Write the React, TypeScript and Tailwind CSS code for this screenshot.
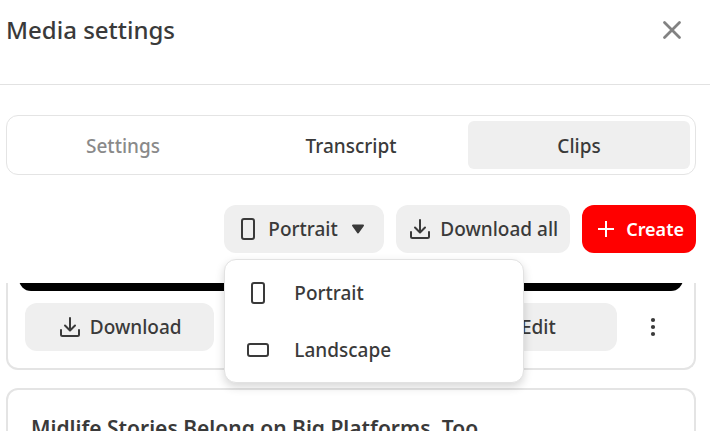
import { useState } from 'react';
import type { ReactNode } from 'react';

const tabs = ['Settings', 'Transcript', 'Clips'];
const formats = ['Portrait', 'Landscape'];

function PortraitIcon() {
  return (
    <svg className="size-6" viewBox="0 0 24 24" fill="none" stroke="currentColor" strokeWidth="2" aria-hidden="true">
      <rect x="6" y="2" width="12" height="20" rx="2" />
    </svg>
  );
}

function LandscapeIcon() {
  return (
    <svg className="size-6" viewBox="0 0 24 24" fill="none" stroke="currentColor" strokeWidth="2" aria-hidden="true">
      <rect x="2" y="6" width="20" height="12" rx="2" />
    </svg>
  );
}

function DownloadIcon() {
  return (
    <svg
      className="size-6"
      viewBox="0 0 24 24"
      fill="none"
      stroke="currentColor"
      strokeWidth="2"
      strokeLinecap="round"
      strokeLinejoin="round"
      aria-hidden="true"
    >
      <path d="M12 3v12M7 10.500l5 5 5-5M3 15v4.500a1.500 1.500 0 0 0 1.500 1.500h15a1.500 1.500 0 0 0 1.500-1.500V15" />
    </svg>
  );
}

function EditIcon() {
  return (
    <svg className="size-6" viewBox="0 0 24 24" fill="none" stroke="currentColor" strokeWidth="2" aria-hidden="true">
      <path d="M4 20h4L19 9l-4-4L4 16z" />
    </svg>
  );
}

function SoftButton({ icon, children, className = '' }: { icon: ReactNode; children: ReactNode; className?: string }) {
  return (
    <button type="button" className={`flex h-12 items-center justify-center gap-2 rounded-xl bg-[#efefef] px-3 ${className}`}>
      {icon}
      {children}
    </button>
  );
}

export default function App() {
  const [tab, setTab] = useState('Clips');
  const [format, setFormat] = useState('Portrait');
  const [open, setOpen] = useState(true);

  return (
    <main className="flex h-screen flex-col overflow-hidden bg-white font-['Noto_Sans',sans-serif] text-[19px] leading-6 font-medium text-[#3a3a3a]">
      <header className="flex items-start justify-between border-b border-[#e2e2e2] pt-3 pr-5 pb-9 pl-1.5">
        <h1 className="text-2xl leading-9 font-medium">Media settings</h1>
        <button type="button" aria-label="Close" className="flex size-9 items-center justify-center text-[#828282]">
          <svg className="size-6" viewBox="0 0 24 24" fill="none" stroke="currentColor" strokeWidth="2.800" strokeLinecap="round">
            <path d="M4.500 4.500l15 15M19.500 4.500l-15 15" />
          </svg>
        </button>
      </header>

      <div className="flex min-h-0 flex-1 flex-col pt-[30px] pr-3.5 pl-1.5">
        {/* Tabs */}
        <div role="tablist" className="grid grid-cols-3 gap-1.5 rounded-xl border border-[#e4e4e4] p-[5px]">
          {tabs.map((name) => (
            <button
              key={name}
              type="button"
              role="tab"
              aria-selected={tab === name}
              onClick={() => setTab(name)}
              className={`h-12 rounded-md pt-0.5 ${tab === name ? 'bg-[#efefef]' : ''} ${name === 'Settings' ? 'text-[#8a8a8a]' : ''}`}
            >
              {name}
            </button>
          ))}
        </div>

        {/* Toolbar */}
        <div className="flex justify-end gap-3 py-[30px]">
          <div className="relative">
            <button
              type="button"
              aria-haspopup="listbox"
              aria-expanded={open}
              onClick={() => setOpen(!open)}
              className="flex h-12 w-40 items-center rounded-xl bg-[#efefef] px-3"
            >
              {format === 'Portrait' ? <PortraitIcon /> : <LandscapeIcon />}
              <span className="ml-2">{format}</span>
              <svg className="ml-auto h-3 w-7" viewBox="0 0 28 12" fill="currentColor" stroke="currentColor" strokeWidth="2" strokeLinejoin="round" aria-hidden="true">
                <path d="M9 2.500h10L14 9.500z" />
              </svg>
            </button>
            {open && (
              <ul
                role="listbox"
                aria-label="Format"
                className="absolute top-[54px] left-0 z-10 w-[300px] rounded-xl border border-[#e2e2e2] bg-white py-1 shadow-[0_4px_10px_rgba(0,0,0,0.16)]"
              >
                {formats.map((name) => (
                  <li key={name} role="option" aria-selected={format === name}>
                    <button
                      type="button"
                      onClick={() => {
                        setFormat(name);
                        setOpen(false);
                      }}
                      className="flex h-[57px] w-full items-center gap-6 px-[21px]"
                    >
                      {name === 'Portrait' ? <PortraitIcon /> : <LandscapeIcon />}
                      {name}
                    </button>
                  </li>
                ))}
              </ul>
            )}
          </div>
          <SoftButton icon={<DownloadIcon />}>Download all</SoftButton>
          <button type="button" className="flex h-12 items-center gap-2 rounded-xl bg-[#ff0000] px-3 text-lg leading-6 font-semibold text-white">
            <svg className="size-6" viewBox="0 0 24 24" fill="none" stroke="currentColor" strokeWidth="2" aria-hidden="true">
              <path d="M12 4v16M4 12h16" />
            </svg>
            Create
          </button>
        </div>

        {/* Clips */}
        <div className="flex min-h-0 flex-1 flex-col gap-[18px] overflow-hidden">
          <article className="shrink-0 rounded-b-xl border-2 border-t-0 border-[#e4e4e4] pb-[17px]">
            <div className="mx-[11px] flex h-2 flex-col justify-end overflow-hidden">
              <div className="h-8 shrink-0 rounded-b-xl bg-black" />
            </div>
            <div className="mt-3 flex gap-3 px-[17px]">
              <div className="grid flex-1 grid-cols-3 gap-3">
                <SoftButton icon={<DownloadIcon />}>Download</SoftButton>
                <SoftButton icon={<EditIcon />} className="col-start-3">
                  Edit
                </SoftButton>
              </div>
              <button type="button" aria-label="More" className="flex size-12 items-center justify-center">
                <svg className="size-6" viewBox="0 0 24 24" fill="currentColor">
                  <circle cx="12" cy="5" r="2.100" />
                  <circle cx="12" cy="12" r="2.100" />
                  <circle cx="12" cy="19" r="2.100" />
                </svg>
              </button>
            </div>
          </article>
          <article className="shrink-0 rounded-xl border-2 border-[#e4e4e4] px-[23px] py-[22px]">
            <h2 className="text-[21px] leading-8 font-semibold">Midlife Stories Belong on Big Platforms, Too</h2>
          </article>
        </div>
      </div>
    </main>
  );
}
